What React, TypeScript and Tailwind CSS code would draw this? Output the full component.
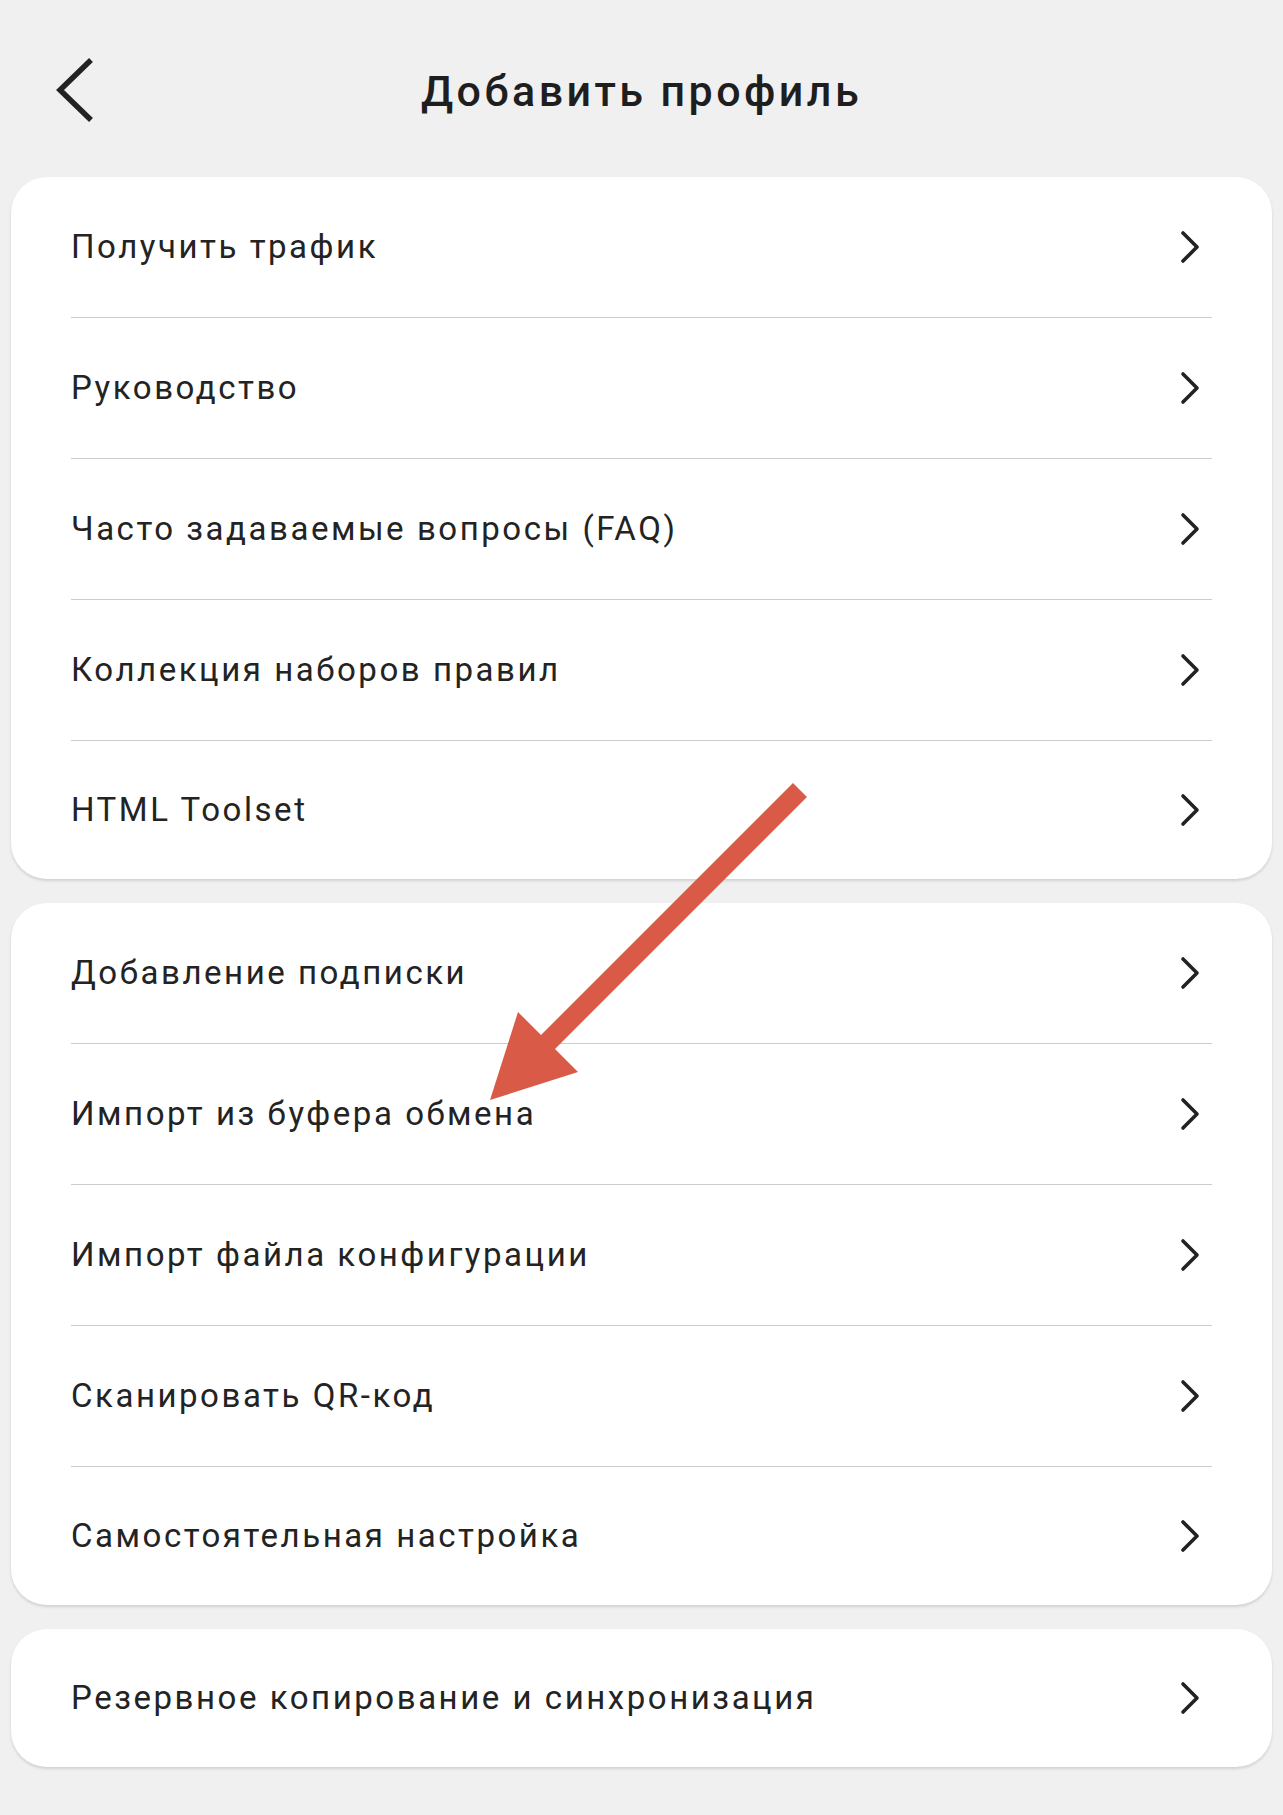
import React from "react";

const group1 = [
  "Получить трафик",
  "Руководство",
  "Часто задаваемые вопросы (FAQ)",
  "Коллекция наборов правил",
  "HTML Toolset",
];
const group2 = [
  "Добавление подписки",
  "Импорт из буфера обмена",
  "Импорт файла конфигурации",
  "Сканировать QR-код",
  "Самостоятельная настройка",
];
const group3 = ["Резервное копирование и синхронизация"];

function Chevron() {
  return (
    <svg width="20" height="34" viewBox="0 0 20 34" className="shrink-0">
      <polyline
        points="3,3 17,17 3,31"
        fill="none"
        stroke="#222222"
        strokeWidth="3.6"
        strokeLinecap="round"
        strokeLinejoin="round"
      />
    </svg>
  );
}

function Card({ items }: { items: string[] }) {
  return (
    <div className="mx-[11px] rounded-[36px] bg-white shadow-[0_2px_3px_rgba(0,0,0,0.13)]">
      {items.map((t, i) => {
        const last = i === items.length - 1;
        return (
          <div key={t} className="px-[60px]">
            <div
              className={
                last
                  ? "flex h-[138px] items-center justify-between"
                  : "flex h-[141px] items-center justify-between border-b border-[#cccccc]"
              }
            >
              <span className="text-[33px] tracking-[0.077em] text-[#232323]">{t}</span>
              <div className="mr-[12px]">
                <Chevron />
              </div>
            </div>
          </div>
        );
      })}
    </div>
  );
}

export default function App() {
  return (
    <div
      className="relative min-h-[1815px] w-full bg-[#f0f0f0]"
      style={{ fontFamily: "Roboto, 'Noto Sans', sans-serif" }}
    >
      <header className="relative flex h-[177px] items-center justify-center pt-[6px]">
        <svg
          width="50"
          height="72"
          viewBox="0 0 50 72"
          className="absolute left-[48px] top-[54px]"
        >
          <polyline
            points="43,6 12,36 43,66"
            fill="none"
            stroke="#222222"
            strokeWidth="5.5"
            strokeLinecap="butt"
            strokeLinejoin="miter"
          />
        </svg>
        <h1 className="text-[43px] font-medium tracking-[0.08em] text-[#1e1e1e]">
          Добавить профиль
        </h1>
      </header>
      <div className="flex flex-col gap-[24px]">
        <Card items={group1} />
        <Card items={group2} />
        <Card items={group3} />
      </div>
      <svg
        className="pointer-events-none absolute left-0 top-0"
        width="1283"
        height="1815"
        viewBox="0 0 1283 1815"
      >
        <polygon
          points="793,783 807,797 555,1049 578,1072 490,1100 518,1012 541,1035"
          fill="#d85a47"
        />
      </svg>
    </div>
  );
}
